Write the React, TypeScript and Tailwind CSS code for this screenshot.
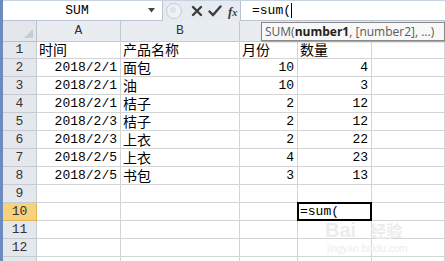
import React from 'react';

const mono = "font-['Liberation_Mono','Noto_Sans_CJK_SC',monospace]";
const cjk = "font-['Noto_Sans_CJK_SC',sans-serif]";

type Cell = {text: string; align?: 'left' | 'right'; kind?: 'num' | 'cjk'};

const rows: Cell[][] = [
  [{text: '时间', kind: 'cjk'}, {text: '产品名称', kind: 'cjk'}, {text: '月份', kind: 'cjk'}, {text: '数量', kind: 'cjk'}],
  [{text: '2018/2/1', align: 'right'}, {text: '面包', kind: 'cjk'}, {text: '10', align: 'right'}, {text: '4', align: 'right'}],
  [{text: '2018/2/1', align: 'right'}, {text: '油', kind: 'cjk'}, {text: '10', align: 'right'}, {text: '3', align: 'right'}],
  [{text: '2018/2/1', align: 'right'}, {text: '桔子', kind: 'cjk'}, {text: '2', align: 'right'}, {text: '12', align: 'right'}],
  [{text: '2018/2/3', align: 'right'}, {text: '桔子', kind: 'cjk'}, {text: '2', align: 'right'}, {text: '12', align: 'right'}],
  [{text: '2018/2/3', align: 'right'}, {text: '上衣', kind: 'cjk'}, {text: '2', align: 'right'}, {text: '22', align: 'right'}],
  [{text: '2018/2/5', align: 'right'}, {text: '上衣', kind: 'cjk'}, {text: '4', align: 'right'}, {text: '23', align: 'right'}],
  [{text: '2018/2/5', align: 'right'}, {text: '书包', kind: 'cjk'}, {text: '3', align: 'right'}, {text: '13', align: 'right'}],
  [],
  [],
  [],
  [],
  [],
];

const gridCols = 'grid grid-cols-[34px_84px_119px_58px_74px_1fr]';

const DataCell = ({cell}: {cell?: Cell}) => {
  if (!cell) return <div className="h-[18px] border-r border-b border-[#d4d4d4]" />;
  const font = cell.kind === 'cjk' ? `${cjk} text-[14px]` : `${mono} text-[13px]`;
  return (
    <div
      className={`h-[18px] border-r border-b border-[#d4d4d4] flex items-center whitespace-nowrap text-black leading-[17px] ${font} ${
        cell.align === 'right' ? 'justify-end pr-[3px]' : 'pl-[2px]'
      }`}
    >
      {cell.text}
    </div>
  );
};

const App = () => {
  return (
    <div className="w-[445px] h-[261px] overflow-hidden flex bg-white relative">
      <div className="w-[3px] shrink-0 bg-[#6b8cbc]" />
      <div className="flex-1 flex flex-col">
        {/* formula bar */}
        <div className="h-[21px] flex bg-[#e6ebf1] border-t border-[#c9d3df]">
          <div className="w-[160px] h-full bg-white border-r border-b border-[#b9c4d2] flex items-center">
            <span className={`flex-1 text-center pl-[3px] text-[13px] text-black ${mono}`}>SUM</span>
            <svg width="8" height="5" viewBox="0 0 8 5" className="mr-[6px]">
              <path d="M0 0 H7 L3.5 4.5 Z" fill="#444" />
            </svg>
          </div>
          <div className="w-[77px] flex items-center">
            <svg width="18" height="18" viewBox="0 0 18 18" className="ml-[2px]">
              <circle cx="9" cy="9" r="7.5" fill="#eef1f5" stroke="#c4ccd6" />
              <circle cx="8" cy="8" r="3" fill="#dde3ea" />
            </svg>
            <svg width="12" height="12" viewBox="0 0 12 12" className="ml-[8px]">
              <path d="M2 2 L10 10 M10 2 L2 10" stroke="#3c3c3c" strokeWidth="2.4" strokeLinecap="round" />
            </svg>
            <svg width="14" height="12" viewBox="0 0 14 12" className="ml-[5px]">
              <path d="M1.5 6.5 L5 10 L12.5 1.5" stroke="#3c3c3c" strokeWidth="2.4" fill="none" strokeLinecap="round" />
            </svg>
            <span className="ml-[6px] text-[13px] italic font-bold text-[#3a3a3a] font-['Liberation_Serif',serif] leading-none">
              f<span className="text-[10px]">x</span>
            </span>
          </div>
          <div className="flex-1 h-full bg-white border-l border-b border-[#b9c4d2] flex items-center pl-[11px]">
            <span className={`text-[13px] text-black ${mono}`}>=sum(</span>
            <span className="w-px h-[15px] bg-black" />
          </div>
        </div>
        <div className="h-[1px] bg-[#dde4ec]" />

        {/* column header */}
        <div className={`${gridCols} h-[20px]`}>
          <div className="border-r border-b border-[#b8c2ce] bg-[#e3e7ec] relative">
            <svg width="9" height="9" viewBox="0 0 9 9" className="absolute right-[3px] bottom-[3px]">
              <path d="M9 0 V9 H0 Z" fill="#c8ccd1" />
            </svg>
          </div>
          {['A', 'B', '', '', ''].map((l, i) => (
            <div
              key={i}
              className={`border-r border-b border-[#c3c9d1] bg-[#e9edf2] flex items-center justify-center text-[13px] text-[#333] ${mono}`}
            >
              {l}
            </div>
          ))}
        </div>

        {/* rows */}
        {rows.map((r, i) => (
          <div key={i} className={gridCols}>
            <div
              className={`h-[18px] border-r border-b flex items-center justify-center text-[13px] ${mono} ${
                i === 9 ? 'bg-[#f8d27a] border-[#e2b552] text-[#333]' : 'bg-[#e4e7ec] border-[#c5cbd3] text-[#333]'
              }`}
            >
              {i < 12 ? i + 1 : ''}
            </div>
            <DataCell cell={r[0]} />
            <DataCell cell={r[1]} />
            <DataCell cell={r[2]} />
            {i === 9 ? (
              <div className="h-[18px] border-r border-b border-[#d4d4d4] relative">
                <div className="absolute -left-[1px] -top-[1px] -right-[1px] -bottom-[1px] border-2 border-black flex items-center pl-[1px]">
                  <span className={`text-[13px] text-black leading-none ${mono}`}>=sum(</span>
                </div>
              </div>
            ) : (
              <DataCell cell={r[3]} />
            )}
            <DataCell />
          </div>
        ))}
      </div>

      {/* function tooltip */}
      <div className="absolute left-[261px] top-[22px] w-[184px] h-[19px] bg-[#f8f8f8] border border-[#8a8a8a] shadow-[1px_1px_2px_rgba(0,0,0,0.25)] flex items-center pl-[3px] whitespace-nowrap text-[12px] text-[#5a5a5a] font-['Open_Sans','Liberation_Sans',sans-serif]">
        SUM(<b className="text-[#222]">number1</b>, [number2], ...)
      </div>

      {/* watermark */}
      <div className="absolute left-[325px] top-[220px] text-[20px] font-bold text-[#ececec] font-['Liberation_Sans',sans-serif] leading-none pointer-events-none">
        Bai<span className={`${cjk} text-[16px] ml-[14px]`}>经验</span>
      </div>
      <div className="absolute left-[327px] top-[244px] text-[10px] text-[#ededed] font-['Liberation_Sans',sans-serif] leading-none">
        jingyan.baidu.com
      </div>
    </div>
  );
};

export default App;
